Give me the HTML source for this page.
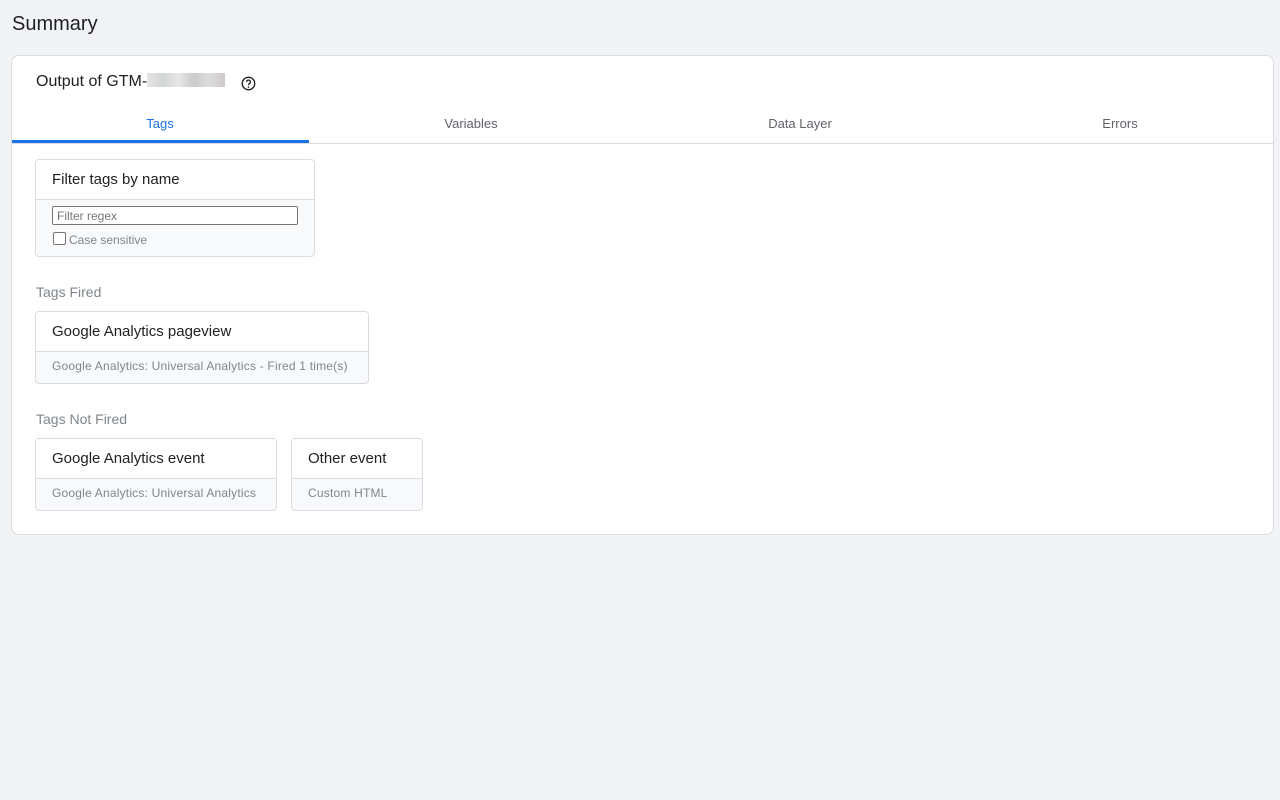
<!DOCTYPE html>
<html><head><style>
body{margin:0;width:1280px;height:800px;background:#f1f3f4;font-family:"Liberation Sans",Arial,sans-serif;position:relative;overflow:hidden}
.a{position:absolute}
.card{position:absolute;left:11px;top:55px;width:1261px;height:478px;background:#fff;border:1px solid #dadce0;border-radius:8px}
.tab{position:absolute;top:116px;font-size:13px;color:#5f6368;transform:translateX(-50%)}
.box{position:absolute;border:1px solid #dadce0;border-radius:4px;background:#f8f9fa;overflow:hidden;box-sizing:border-box}
.box .h{background:#fff;height:40px;border-bottom:1px solid #dadce0;box-sizing:border-box;padding:11px 16px 0;font-size:15px;color:#202124}
.box .s{padding:7px 16px 0;font-size:12px;color:#80868b;letter-spacing:.2px}
.lbl{position:absolute;left:36px;font-size:14px;color:#80868b}
</style></head><body>
<div class="a" style="left:12px;top:13px;font-size:20px;color:#202124">Summary</div>
<div class="card"></div>
<div class="a" style="left:36px;top:73px;font-size:16px;color:#202124">Output of GTM-<span style="display:inline-block;width:78px;height:14px;background:linear-gradient(90deg,#e4e6e4,#d2d6d3,#e8e6e6,#c9cbc9,#dcdcdc,#cfc9c9);vertical-align:-1px"></span></div>
<svg class="a" style="left:241px;top:76px" width="15" height="15" viewBox="0 0 24 24"><circle cx="12" cy="12" r="10" fill="none" stroke="#202124" stroke-width="2.2"/><path d="M9 9.5a3 3 0 1 1 4.5 2.6c-1 .6-1.5 1.2-1.5 2.4" fill="none" stroke="#202124" stroke-width="2.2"/><circle cx="12" cy="17.6" r="1.3" fill="#202124"/></svg>
<div class="tab" style="left:160px;color:#1a73e8">Tags</div>
<div class="tab" style="left:471px">Variables</div>
<div class="tab" style="left:800px">Data Layer</div>
<div class="tab" style="left:1120px">Errors</div>
<div class="a" style="left:12px;top:143px;width:1261px;height:1px;background:#dadce0"></div>
<div class="a" style="left:12px;top:140px;width:297px;height:3px;background:#1a73e8"></div>
<div class="box" style="left:35px;top:159px;width:280px;height:98px">
<div class="h">Filter tags by name</div>
<div class="a" style="left:16px;top:46px;width:246px;height:19px;border:1px solid #767676;border-radius:2px;background:#fff;box-sizing:border-box;font-size:12px;color:#757575;padding:2px 4px">Filter regex</div>
<div class="a" style="left:17px;top:72px;width:11px;height:11px;border:1px solid #767676;border-radius:2px;background:#fff"></div>
<div class="a" style="left:33px;top:73px;font-size:12px;color:#80868b">Case sensitive</div>
</div>
<div class="lbl" style="top:284px">Tags Fired</div>
<div class="box" style="left:35px;top:311px;width:334px;height:73px"><div class="h">Google Analytics pageview</div><div class="s">Google Analytics: Universal Analytics - Fired 1 time(s)</div></div>
<div class="lbl" style="top:411px">Tags Not Fired</div>
<div class="box" style="left:35px;top:438px;width:242px;height:73px"><div class="h">Google Analytics event</div><div class="s">Google Analytics: Universal Analytics</div></div>
<div class="box" style="left:291px;top:438px;width:132px;height:73px"><div class="h">Other event</div><div class="s">Custom HTML</div></div>
</body></html>
